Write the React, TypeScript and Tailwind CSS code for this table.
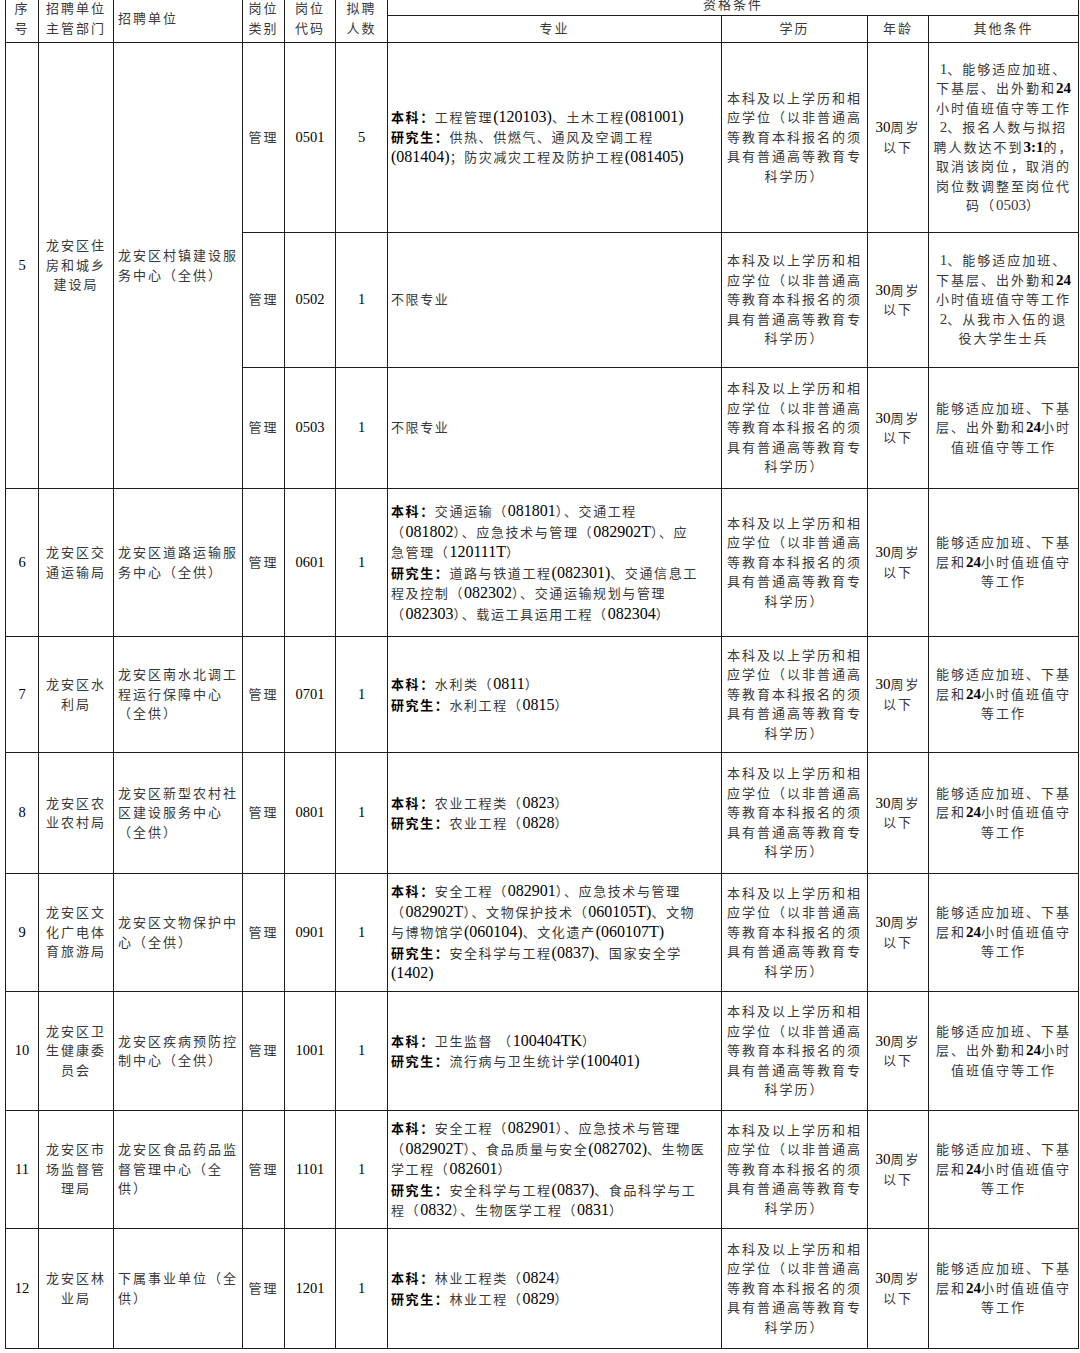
import React from "react";

type Row = {
 no?: string;
 dept?: string[];
 unit?: string[];
 span?: number;
 code: string;
 num: string;
 major: string[];
 other: string[];
 h: string;
};

const EDU = [
 "本科及以上学历和相",
 "应学位（以非普通高",
 "等教育本科报名的须",
 "具有普通高等教育专",
 "科学历）",
];
const AGE = ["30周岁", "以下"];

const OTHER_A = ["能够适应加班、下基", "层和*24*小时值班值守", "等工作"];
const OTHER_B = ["能够适应加班、下基", "层、出外勤和*24*小时", "值班值守等工作"];

const rows: Row[] = [
 {
  no: "5",
  dept: ["龙安区住", "房和城乡", "建设局"],
  unit: ["龙安区村镇建设服", "务中心（全供）"],
  span: 3,
  code: "0501",
  num: "5",
  major: [
   "*本科：*工程管理(120103)、土木工程(081001)",
   "*研究生：*供热、供燃气、通风及空调工程",
   "(081404)；防灾减灾工程及防护工程(081405)",
  ],
  other: [
   "1、能够适应加班、",
   "下基层、出外勤和*24*",
   "小时值班值守等工作",
   "2、报名人数与拟招",
   "聘人数达不到*3:1*的，",
   "取消该岗位，取消的",
   "岗位数调整至岗位代",
   "码（0503）",
  ],
  h: "h-[190px]",
 },
 {
  code: "0502",
  num: "1",
  major: ["不限专业"],
  other: [
   "1、能够适应加班、",
   "下基层、出外勤和*24*",
   "小时值班值守等工作",
   "2、从我市入伍的退",
   "役大学生士兵",
  ],
  h: "h-[135px]",
 },
 {
  code: "0503",
  num: "1",
  major: ["不限专业"],
  other: OTHER_B,
  h: "h-[121px]",
 },
 {
  no: "6",
  dept: ["龙安区交", "通运输局"],
  unit: ["龙安区道路运输服", "务中心（全供）"],
  code: "0601",
  num: "1",
  major: [
   "*本科：*交通运输（081801）、交通工程",
   "（081802）、应急技术与管理（082902T）、应",
   "急管理（120111T）",
   "*研究生：*道路与铁道工程(082301)、交通信息工",
   "程及控制（082302）、交通运输规划与管理",
   "（082303）、载运工具运用工程（082304）",
  ],
  other: OTHER_A,
  h: "h-[148px]",
 },
 {
  no: "7",
  dept: ["龙安区水", "利局"],
  unit: ["龙安区南水北调工", "程运行保障中心", "（全供）"],
  code: "0701",
  num: "1",
  major: ["*本科：*水利类（0811）", "*研究生：*水利工程（0815）"],
  other: OTHER_A,
  h: "h-[116px]",
 },
 {
  no: "8",
  dept: ["龙安区农", "业农村局"],
  unit: ["龙安区新型农村社", "区建设服务中心", "（全供）"],
  code: "0801",
  num: "1",
  major: ["*本科：*农业工程类（0823）", "*研究生：*农业工程（0828）"],
  other: OTHER_A,
  h: "h-[121px]",
 },
 {
  no: "9",
  dept: ["龙安区文", "化广电体", "育旅游局"],
  unit: ["龙安区文物保护中", "心（全供）"],
  code: "0901",
  num: "1",
  major: [
   "*本科：*安全工程（082901）、应急技术与管理",
   "（082902T）、文物保护技术（060105T)、文物",
   "与博物馆学(060104)、文化遗产(060107T)",
   "*研究生：*安全科学与工程(0837)、国家安全学",
   "(1402)",
  ],
  other: OTHER_A,
  h: "h-[118px]",
 },
 {
  no: "10",
  dept: ["龙安区卫", "生健康委", "员会"],
  unit: ["龙安区疾病预防控", "制中心（全供）"],
  code: "1001",
  num: "1",
  major: ["*本科：*卫生监督 （100404TK）", "*研究生：*流行病与卫生统计学(100401)"],
  other: OTHER_B,
  h: "h-[119px]",
 },
 {
  no: "11",
  dept: ["龙安区市", "场监督管", "理局"],
  unit: ["龙安区食品药品监", "督管理中心（全", "供）"],
  code: "1101",
  num: "1",
  major: [
   "*本科：*安全工程（082901）、应急技术与管理",
   "（082902T）、食品质量与安全(082702)、生物医",
   "学工程（082601）",
   "*研究生：*安全科学与工程(0837)、食品科学与工",
   "程（0832）、生物医学工程（0831）",
  ],
  other: OTHER_A,
  h: "h-[118px]",
 },
 {
  no: "12",
  dept: ["龙安区林", "业局"],
  unit: ["下属事业单位（全", "供）"],
  code: "1201",
  num: "1",
  major: ["*本科：*林业工程类（0824）", "*研究生：*林业工程（0829）"],
  other: OTHER_A,
  h: "h-[120px]",
 },
];

// "*...*" marks bold; ascii runs get the serif digit size and no tracking
const Txt = ({text, num}: {text: string; num: string}) => (
 <>
  {text.split("*").map((part, i) =>
   part.split(/([!-~]+)/).map((piece, j) => {
    if (!piece) return null;
    const bold = i % 2 === 1;
    const ascii = /^[!-~]+$/.test(piece);
    return (
     <span
      key={`${i}-${j}`}
      className={`${ascii ? `${num} tracking-normal` : ""} ${bold ? "font-bold text-black" : ""}`}
     >
      {piece}
     </span>
    );
   })
  )}
 </>
);

const Lines = ({lines, num = "text-[15px]"}: {lines: string[]; num?: string}) => (
 <>
  {lines.map((l, i) => (
   <div key={i} className="whitespace-nowrap">
    <Txt text={l} num={num} />
   </div>
  ))}
 </>
);

const cell = "border border-[#1c1c1c] align-middle p-0";

const App = () => {
 return (
  <div className="w-[1080px] h-[1353px] overflow-hidden bg-white">
   <table
    className="-mt-[6px] ml-[5px] w-[1073px] table-fixed border-collapse text-[13px] leading-[19.5px] tracking-[2px] text-[#383838]"
    style={{fontFamily: '"Liberation Serif", "Noto Sans CJK SC", serif'}}
   >
    <colgroup>
     <col className="w-[33px]" />
     <col className="w-[75px]" />
     <col className="w-[129px]" />
     <col className="w-[42px]" />
     <col className="w-[51px]" />
     <col className="w-[52px]" />
     <col className="w-[334px]" />
     <col className="w-[146px]" />
     <col className="w-[61px]" />
     <col className="w-[150px]" />
    </colgroup>
    <thead>
     <tr className="h-[21px]">
      <th rowSpan={2} className={`${cell} text-center font-normal`}>
       <Lines lines={["序", "号"]} />
      </th>
      <th rowSpan={2} className={`${cell} text-center font-normal`}>
       <Lines lines={["招聘单位", "主管部门"]} />
      </th>
      <th rowSpan={2} className={`${cell} text-left font-normal pl-[4px]`}>
       招聘单位
      </th>
      <th rowSpan={2} className={`${cell} text-center font-normal`}>
       <Lines lines={["岗位", "类别"]} />
      </th>
      <th rowSpan={2} className={`${cell} text-center font-normal`}>
       <Lines lines={["岗位", "代码"]} />
      </th>
      <th rowSpan={2} className={`${cell} text-center font-normal`}>
       <Lines lines={["拟聘", "人数"]} />
      </th>
      <th colSpan={4} className={`${cell} text-center font-normal`}>
       资格条件
      </th>
     </tr>
     <tr className="h-[27px]">
      <th className={`${cell} text-center font-normal`}>专业</th>
      <th className={`${cell} text-center font-normal`}>学历</th>
      <th className={`${cell} text-center font-normal`}>年龄</th>
      <th className={`${cell} text-center font-normal`}>其他条件</th>
     </tr>
    </thead>
    <tbody>
     {rows.map((r) => (
      <tr key={r.code} className={r.h}>
       {r.no && (
        <td rowSpan={r.span} className={`${cell} text-center text-black`}>
         <Txt text={r.no} num="text-[14.5px]" />
        </td>
       )}
       {r.dept && (
        <td rowSpan={r.span} className={`${cell} text-center`}>
         <Lines lines={r.dept} />
        </td>
       )}
       {r.unit && (
        <td rowSpan={r.span} className={`${cell} text-left pl-[4px]`}>
         <Lines lines={r.unit} />
        </td>
       )}
       <td className={`${cell} text-center`}>管理</td>
       <td className={`${cell} text-center text-black`}>
        <Txt text={r.code} num="text-[14.5px]" />
       </td>
       <td className={`${cell} text-center text-black`}>
        <Txt text={r.num} num="text-[14.5px]" />
       </td>
       <td className={`${cell} text-left pl-[3px] tracking-[1.6px]`}>
        <Lines lines={r.major} num="text-[16px] text-black" />
       </td>
       <td className={`${cell} text-center`}>
        <Lines lines={EDU} />
       </td>
       <td className={`${cell} text-center`}>
        <Lines lines={AGE} num="text-[15px] text-black" />
       </td>
       <td className={`${cell} text-center`}>
        <Lines lines={r.other} num="text-[15px]" />
       </td>
      </tr>
     ))}
    </tbody>
   </table>
  </div>
 );
};

export default App;
